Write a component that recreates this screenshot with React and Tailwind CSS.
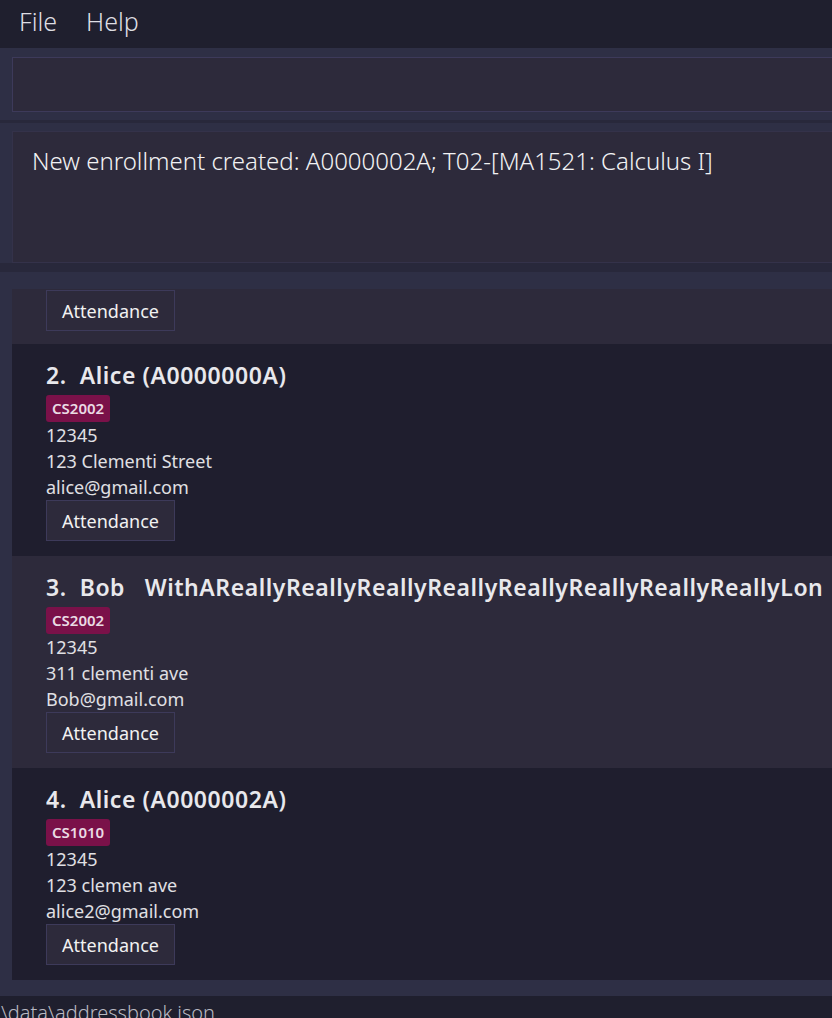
import React from "react";

const font = { fontFamily: '"Noto Sans", "Open Sans", sans-serif' };

const people = [
  {
    idx: "2.",
    name: "Alice (A0000000A)",
    tag: "CS2002",
    phone: "12345",
    address: "123 Clementi Street",
    email: "alice@gmail.com",
    dark: true,
  },
  {
    idx: "3.",
    name: "Bob   WithAReallyReallyReallyReallyReallyReallyReallyReallyLon",
    tag: "CS2002",
    phone: "12345",
    address: "311 clementi ave",
    email: "Bob@gmail.com",
    dark: false,
  },
  {
    idx: "4.",
    name: "Alice (A0000002A)",
    tag: "CS1010",
    phone: "12345",
    address: "123 clemen ave",
    email: "alice2@gmail.com",
    dark: true,
  },
];

const AttendanceButton = () => (
  <button className="h-[41px] w-[129px] border border-[#3d3a5a] bg-[#2d2a3b] text-[18px] text-[#f2f2f2] leading-none">
    Attendance
  </button>
);

const PersonCard = ({ p }) => (
  <div
    className={`pl-[34px] pt-[16px] pb-[15px] ${
      p.dark ? "bg-[#1f1e2e]" : "bg-[#2d2a3b]"
    }`}
  >
    <div className="h-[30px] leading-[30px] text-[23px] font-semibold tracking-[0.55px] text-[#e8e8ec] whitespace-pre overflow-hidden">
      {p.idx}
      {"  "}
      {p.name}
    </div>
    <div className="mt-[5px] flex">
      <span className="h-[27px] px-[6px] leading-[27px] rounded-[3px] bg-[#7a1149] text-[15px] font-semibold text-[#eadbe4]">
        {p.tag}
      </span>
    </div>
    <div className="text-[18px] leading-[26px] text-[#e0e0e4]">
      <div>{p.phone}</div>
      <div>{p.address}</div>
      <div>{p.email}</div>
    </div>
    <AttendanceButton />
  </div>
);

export default function App() {
  return (
    <div
      className="w-[832px] h-[1018px] overflow-hidden bg-[#2e2f45] flex flex-col"
      style={font}
    >
      {/* menu bar */}
      <div className="h-[48px] shrink-0 bg-[#1f1f2e] flex items-center gap-[29px] pl-[19px] pb-[5px] text-[25px] font-light text-[#dedee3]">
        <span>File</span>
        <span>Help</span>
      </div>

      {/* command box */}
      <div className="h-[72px] shrink-0 pt-[9px] pl-[12px]">
        <div className="h-[55px] w-[900px] border border-[#3d3a5a] bg-[#2d2a3b]" />
      </div>
      <div className="h-[3px] shrink-0 bg-[#28283b]" />

      {/* result display */}
      <div className="shrink-0 pt-[8px] pl-[12px]">
        <div className="h-[132px] w-[900px] border border-[#34324a] bg-[#2d2a3b] pl-[19px] pt-[11px] text-[24px] font-light text-[#f2f2f4]">
          New enrollment created: A0000002A; T02-[MA1521: Calculus I]
        </div>
      </div>
      <div className="h-[9px] shrink-0 bg-[#28283b]" />

      {/* person list */}
      <div className="shrink-0 pt-[17px] pl-[12px]">
        <div className="h-[691px] w-[900px] overflow-hidden">
          <div className="bg-[#2d2a3b] pl-[34px] pt-px pb-[13px]">
            <AttendanceButton />
          </div>
          {people.map((p) => (
            <PersonCard key={p.idx} p={p} />
          ))}
        </div>
      </div>

      <div className="h-[16px] shrink-0" />

      {/* status bar */}
      <div className="flex-1 bg-[#1f1f2e] pt-[5px] text-[20px] font-light text-[#b9b9c2] leading-[24px] whitespace-nowrap -indent-[4px]">
        .\data\addressbook.json
      </div>
    </div>
  );
}
